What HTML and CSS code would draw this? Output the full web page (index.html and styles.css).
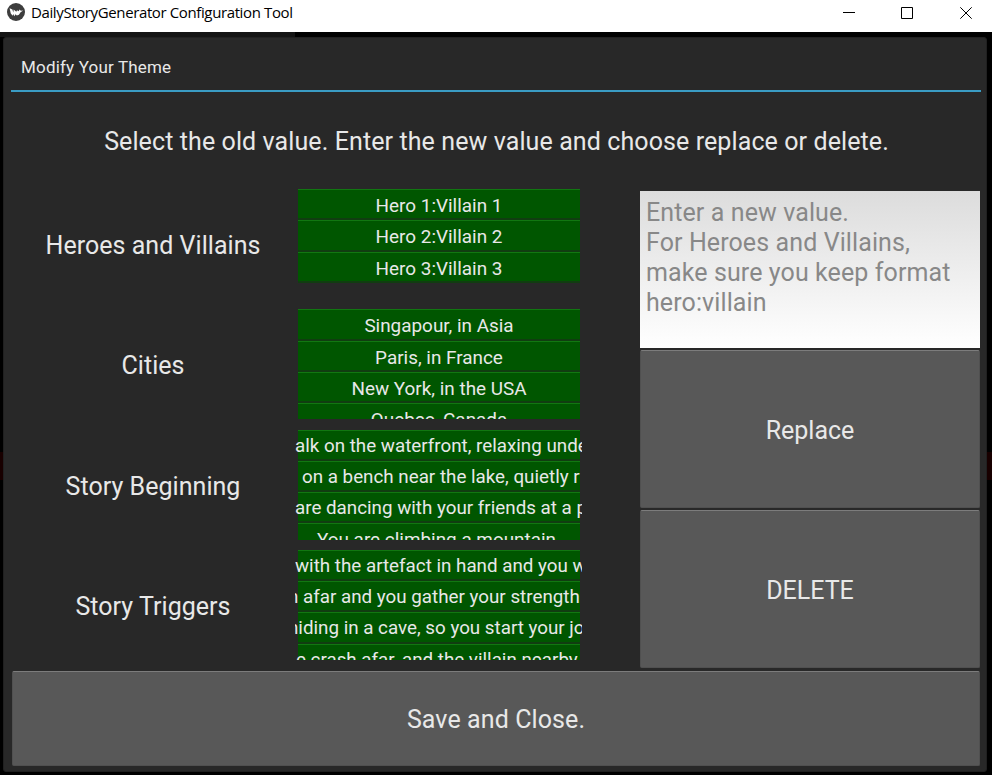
FILE: index.html
```html
<!DOCTYPE html>
<html lang="en">
<head>
<meta charset="utf-8">
<title>DailyStoryGenerator Configuration Tool</title>
<link rel="stylesheet" href="styles.css">
</head>
<body>
<header class="titlebar">
  <svg class="logo" viewBox="0 0 18 18"><circle cx="9" cy="9" r="9" fill="#3d3d3d"/><path d="M2.6 5.2 5.4 6.6l.9 3 .4-3.2 2.6 2.4.7-1.6 1.6 1 1-1.6 1.2 1.1 2.4-.2-2.6 1.7-1.7 2.6-2.1.7-1.3-1.3-1.2 2-1-2.2-.6 1.8-1.9-2.4z" fill="#fff"/></svg>
  <h1 class="caption">DailyStoryGenerator Configuration Tool</h1>
  <div class="controls">
    <svg viewBox="0 0 12 12"><path d="M0 5.5h12"/></svg>
    <svg viewBox="0 0 12 12"><path d="M.5.5h11v11H.5z"/></svg>
    <svg viewBox="0 0 12 12"><path d="M.3.3l11.4 11.4M11.7.3.3 11.7"/></svg>
  </div>
</header>
<main class="stage">
  <section class="modal">
    <h2 class="heading">Modify Your Theme</h2>
    <p class="hint"><span>Select the old value. Enter the new value and choose replace or delete.</span></p>
    <div class="editor">
      <div class="themes">
        <div class="label">Heroes and Villains</div>
        <div class="list">
          <div class="item">Hero 1:Villain 1</div>
          <div class="item">Hero 2:Villain 2</div>
          <div class="item">Hero 3:Villain 3</div>
        </div>
        <div class="label">Cities</div>
        <div class="list">
          <div class="item">Singapour, in Asia</div>
          <div class="item">Paris, in France</div>
          <div class="item">New York, in the USA</div>
          <div class="item">Quebec, Canada</div>
        </div>
        <div class="label lower">Story Beginning</div>
        <div class="list">
          <div class="item long waterfront">alk on the waterfront, relaxing unde</div>
          <div class="item long bench">on a bench near the lake, quietly r</div>
          <div class="item long dancing">are dancing with your friends at a p</div>
          <div class="item">You are climbing a mountain.</div>
        </div>
        <div class="label lower">Story Triggers</div>
        <div class="list">
          <div class="item long artefact">with the artefact in hand and you w</div>
          <div class="item long strength">n afar and you gather your strength</div>
          <div class="item long cave">hiding in a cave, so you start your jo</div>
          <div class="item long crash">e crash afar, and the villain nearby</div>
        </div>
      </div>
      <div class="actions">
        <div class="input">Enter a new value.<br>For Heroes and Villains,<br>make sure you keep format<br>hero:villain</div>
        <button class="button">Replace</button>
        <button class="button">DELETE</button>
      </div>
    </div>
    <button class="button save">Save and Close.</button>
  </section>
</main>
</body>
</html>
```
FILE: styles.css
```css
* { box-sizing: border-box; }
body { margin: 0; width: 992px; height: 775px; overflow: hidden; display: flex; flex-direction: column; background: #000; font-family: Roboto, sans-serif; color: #e8e8e8; }
.titlebar { height: 32px; flex: none; display: flex; align-items: flex-start; background: #fff; color: #000; }
.logo { width: 18px; height: 18px; margin: 3px 0 0 7px; }
.caption { margin: 1px 0 0 6px; font: 400 15px/22px "Open Sans", sans-serif; letter-spacing: -0.38px; white-space: nowrap; }
.controls { margin: 7px 20px 0 auto; display: flex; gap: 47px; }
.controls svg { width: 12px; height: 12px; fill: none; stroke: #000; stroke-width: 1; }
.controls svg:first-child { margin-right: -1px; position: relative; left: 0; margin-left: 1px; }
.stage { flex: 1; padding: 5px 5px 3px 3px; background: linear-gradient(#141414, #141414) 0 0 / 295px 5px no-repeat, linear-gradient(#180000, #180000) 0 420px / 992px 28px no-repeat, #000; }
.modal { height: 735px; padding: 0 5px 6px 8px; display: flex; flex-direction: column; background: #282828; border: 1px solid #202020; border-radius: 3px; }
.heading { margin: 0 0 0 -1px; height: 54px; flex: none; padding: 17px 0 0 10px; border-bottom: 2px solid #3a9cc4; font-size: 17px; line-height: 25px; font-weight: 400; letter-spacing: 0.18px; }
.hint { margin: 0; height: 97px; padding-top: 2px; flex: none; display: flex; justify-content: center; align-items: center; font-size: 25px; letter-spacing: 0.1px; white-space: nowrap; }
.editor { height: 481px; flex: none; display: flex; }
.themes { width: 571px; display: grid; grid-template-columns: 283px 287px; grid-template-rows: repeat(4, 120.3px); }
.label { height: 112px; padding-right: 1px; display: flex; align-items: center; justify-content: center; font-size: 25px; letter-spacing: 0.04px; }
.lower { height: 113px; }
.list { height: 110px; padding: 0 2px 0 3px; overflow: hidden; font-size: 18.9px; }
.item { height: 31.3px; padding-top: 1px; display: flex; justify-content: center; background: #005600; border-top: 1px solid #117711; border-bottom: 2px solid #113d11; line-height: 29px; white-space: nowrap; }
.long { justify-content: flex-start; font-size: 18.8px; }
.waterfront { text-indent: -3px; }
.bench { text-indent: 4px; }
.dancing { text-indent: -3px; }
.artefact { text-indent: -3px; }
.strength { text-indent: -10px; }
.cave { text-indent: -10px; }
.crash { text-indent: -2px; }
.actions { width: 340px; margin: 2px 1px 0 auto; display: flex; flex-direction: column; gap: 2px; }
.input { height: 157px; padding: 7px 6px; background: linear-gradient(#dcdcdc, #fff); color: #888; font-size: 25px; letter-spacing: 0.1px; line-height: 30px; white-space: nowrap; }
.button { height: 158px; padding: 2px 0 0; border: 1px solid #505050; border-top: 1px solid #7c7c7c; border-radius: 2px; background: #585858; color: #e8e8e8; font: 400 25px Roboto, sans-serif; }
.save { height: 95px; flex: none; margin: 1px 1px 0 0; letter-spacing: 0.1px; }
```
